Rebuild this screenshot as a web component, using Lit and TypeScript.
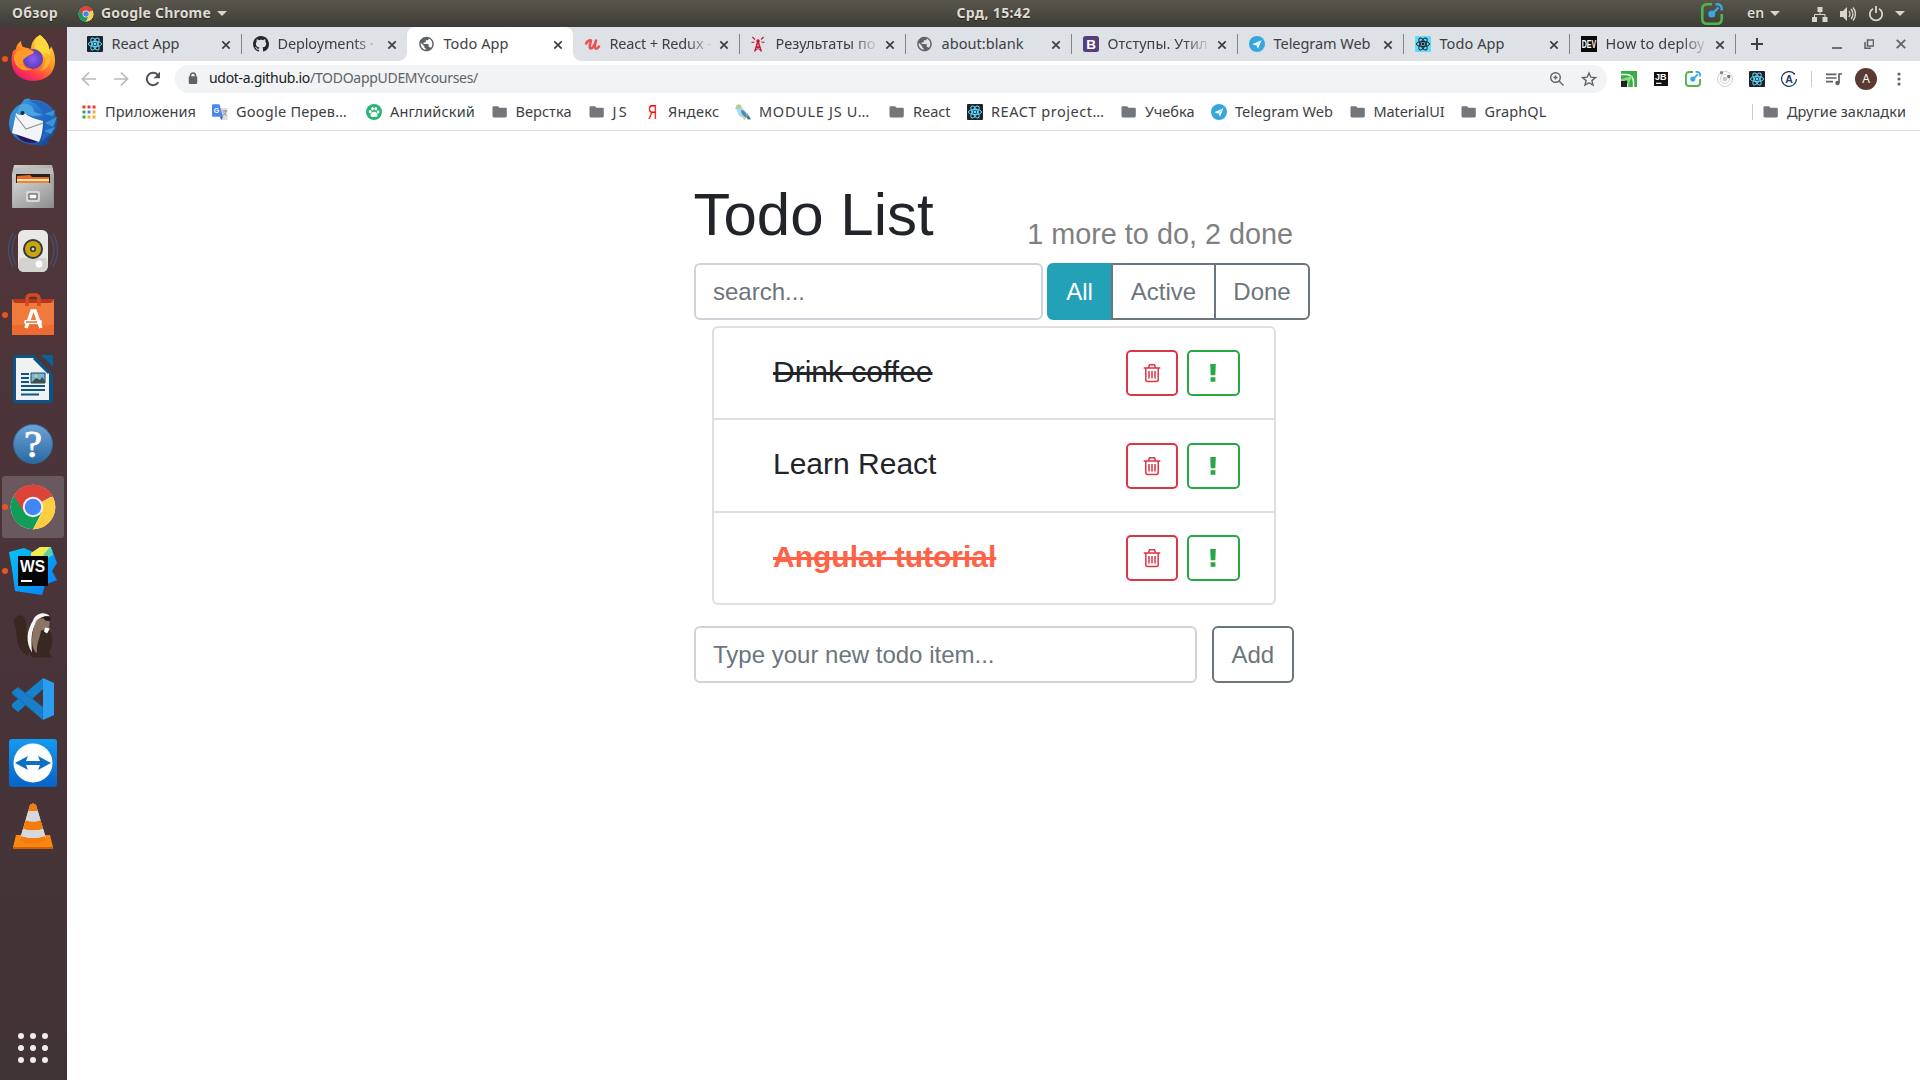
import { LitElement, html, svg, css } from "lit";
import { customElement } from "lit/decorators.js";

const orbit = (c: string) => svg`<g fill="none" stroke=${c} stroke-width="1">
  <ellipse cx="8" cy="8" rx="6.6" ry="2.6"/><ellipse cx="8" cy="8" rx="6.6" ry="2.6" transform="rotate(60 8 8)"/>
  <ellipse cx="8" cy="8" rx="6.6" ry="2.6" transform="rotate(120 8 8)"/></g><circle cx="8" cy="8" r="1.4" fill=${c}/>`;

const chromeArt = svg`<circle cx="24" cy="24" r="22.3" fill="#fff"/>
  <path d="M24 24L4.7 12.9A22.3 22.3 0 0 1 43.3 12.9Z" fill="#db4437"/>
  <path d="M24 24L4.7 12.9A22.3 22.3 0 0 0 24 46.3L33 29Z" fill="#0f9d58"/>
  <path d="M24 24L43.6 13.5A22.3 22.3 0 0 1 24 46.3L33.5 29Z" fill="#ffcd40"/>
  <path d="M24 14H43.9A22.3 22.3 0 0 0 4.7 12.9L15 29Z" fill="#db4437"/>
  <circle cx="24" cy="24" r="10.2" fill="#f1f1f1"/><circle cx="24" cy="24" r="8.2" fill="#4285f4"/>`;

const small: Record<string, unknown> = {
  react: svg`<rect width="16" height="16" rx="1" fill="#20232a"/>${orbit("#61dafb")}`,
  reactLight: svg`<rect width="16" height="16" rx="1" fill="#61dafb"/>${orbit("#20232a")}`,
  github: svg`<path fill="#24292e" d="M8 0C3.58 0 0 3.58 0 8c0 3.54 2.29 6.53 5.47 7.59.4.07.55-.17.55-.38 0-.19-.01-.82-.01-1.49-2.01.37-2.53-.49-2.69-.94-.09-.23-.48-.94-.82-1.13-.28-.15-.68-.52-.01-.53.63-.01 1.08.58 1.23.82.72 1.21 1.87.87 2.33.66.07-.52.28-.87.51-1.07-1.78-.2-3.64-.89-3.64-3.95 0-.87.31-1.59.82-2.15-.08-.2-.36-1.02.08-2.12 0 0 .67-.21 2.2.82.64-.18 1.32-.27 2-.27s1.36.09 2 .27c1.53-1.04 2.2-.82 2.2-.82.44 1.1.16 1.92.08 2.12.51.56.82 1.27.82 2.15 0 3.07-1.87 3.75-3.65 3.95.29.25.54.73.54 1.48 0 1.07-.01 1.93-.01 2.2 0 .21.15.46.55.38A8.01 8.01 0 0 0 16 8c0-4.42-3.58-8-8-8z"/>`,
  globe: svg`<path transform="translate(-1.26 -.76) scale(.73)" fill="#5f6368" d="M12 2C6.480 2 2 6.480 2 12s4.480 10 10 10 10-4.480 10-10S17.520 2 12 2zm-1 17.930c-3.950-.49-7-3.850-7-7.930 0-.62.08-1.210.21-1.790L9 15v1c0 1.100.9 2 2 2v1.930zm6.900-2.540c-.26-.81-1-1.390-1.900-1.390h-1v-3c0-.55-.45-1-1-1H8v-2h2c.55 0 1-.45 1-1V7h2c1.100 0 2-.9 2-2v-.41c2.930 1.190 5 4.060 5 7.410 0 2.080-.8 3.970-2.100 5.390z"/>`,
  udemy: svg`<path d="M1 7.500C2.500 5 4.500 4 6 4.500 6 6 3.800 10 5 12 6.500 13.500 9.500 10.500 11 4.500 10.200 8 9.500 12 10.500 12.500 11.500 13 13 12 14 10.500" fill="none" stroke="#ec5252" stroke-width="2.500" stroke-linecap="round" stroke-linejoin="round"/>`,
  tower: svg`<g fill="none" stroke="#c8193c" stroke-width="1.500"><path d="M7 5L3.700 15.500M7 5l3.300 10.500M4.700 11h4.600M4.500 14l4.500-3.500M9.500 14L5 10.500"/><path d="M4 3.500L1.300 1M3.500 6L.5 6.500M10 3.500L12.700 1M10.500 6l3 .5" stroke-width="1.200"/></g><circle cx="7" cy="5" r="1.800" fill="#c8193c"/>`,
  bootstrap: svg`<rect width="16" height="16" rx="2.500" fill="#563d7c"/><text x="8" y="13" text-anchor="middle" font-family="Liberation Sans, sans-serif" font-weight="700" font-size="13.500" fill="#fff">B</text>`,
  telegram: svg`<circle cx="8" cy="8" r="8" fill="#35a6de"/><path d="M3.300 8.200L12.500 4.200 9 12.800 7.400 9.500z" fill="#fff"/><path d="M7.200 9.400L10.600 6" stroke="#35a6de" stroke-width=".6"/>`,
  dev: svg`<rect width="16" height="16" fill="#0a0a0a"/><text x="8" y="12.200" text-anchor="middle" font-family="Liberation Sans, sans-serif" font-weight="700" font-size="11.500" textLength="14.500" lengthAdjust="spacingAndGlyphs" fill="#fff">DEV</text>`,
  apps: svg`<g><path d="M1.500 1.500h3v3h-3zM6.500 1.500h3v3h-3zM11.500 1.500h3v3h-3z" fill="#ea3b35"/><path d="M1.500 6.500h3v3h-3z" fill="#34a853"/><path d="M6.500 6.500h3v3h-3z" fill="#4285f4"/><path d="M11.500 6.500h3v3h-3z" fill="#f9ab2d"/><path d="M1.500 11.500h3v3h-3z" fill="#34a853"/><path d="M6.500 11.500h3v3h-3zM11.500 11.500h3v3h-3z" fill="#f9ab2d"/></g>`,
  translate: svg`<path d="M6 4h9.500v12H9z" fill="#dcdcdc"/><path d="M7.500 12.500h3.500L9.500 16z" fill="#3b67c4"/><path d="M0 1.200Q0 .3 1 .3h6.500L11 12.800H1Q0 12.800 0 11.800z" fill="#4a86ee"/><text x="1.800" y="8.500" font-family="Liberation Sans, sans-serif" font-weight="700" font-size="7" fill="#fff">G</text><path d="M10.500 7h4.500M12.700 6v1M14 7c-.3 2-1.500 3.500-3 4.300M11.500 8.500c.6 1.300 1.700 2.300 3 3" fill="none" stroke="#7b8894" stroke-width=".9"/>`,
  paw: svg`<circle cx="8" cy="8" r="8" fill="#29b473"/><g fill="#fff"><ellipse cx="4.200" cy="7.800" rx="1.400" ry="1.700"/><ellipse cx="6.600" cy="4.800" rx="1.400" ry="1.800"/><ellipse cx="9.800" cy="4.800" rx="1.400" ry="1.800"/><ellipse cx="12.100" cy="8" rx="1.400" ry="1.700"/><path d="M8 7.800c2 0 3.800 2.200 3.500 4-.4 1.800-2 .9-3.500.9s-3 .9-3.400-.9C4.300 10 6 7.800 8 7.800z"/></g>`,
  folder: svg`<path d="M1.300 2.300h4.700L7.500 3.800h6q1.300 0 1.300 1.300v7q0 1.400-1.300 1.400H1.700Q.5 13.500.5 12.100V3.300q0-1 .8-1z" fill="#73777b"/>`,
  yandex: svg`<text x="4" y="15.300" font-family="Liberation Sans, sans-serif" font-size="20" textLength="9" lengthAdjust="spacingAndGlyphs" fill="#f00">Я</text>`,
  bird: svg`<path d="M9 10l4 5.500 3-.3L12 9z" fill="#3975a5"/><path d="M2 4C1.500 8 3.500 13.500 9 14c3.500.3 4-2 3-4.500L6.500 2.500z" fill="#a5dcf6"/><path d="M6 6c3 0 6 3 6 7.500C8.500 13 6 10 6 6z" fill="#5b87a0"/><path d="M0 5L1.500 1.500c1.500-2 5-1 5 2L3 6z" fill="#8fd0f2"/><path d="M1.500 1.800C3.500-.5 6 .5 6.500 3L3.500 3.500z" fill="#e3bf4a"/><path d="M7.500 13.700c1.500.6 3 .3 4-.5l-1.700 2.500z" fill="#d6d137"/>`,
  privat: svg`<path d="M0 0h16v16H0z" fill="#37ad44"/><path d="M0 3.500h5C9.500 3.500 12.500 6.500 12.500 11v5" fill="none" stroke="#f4fff3" stroke-width="1.500"/><path d="M.5 8L13 4.500 8.500 10 8 16 6.500 9.500z" fill="#8fd884"/><path d="M0 8.500q7-.5 7 7.500H0z" fill="#f4fff3"/><path d="M0 9.700h6V16H0z" fill="#231f20"/>`,
  jb: svg`<path d="M1 1h14v14H1z" fill="#111"/><text x="2" y="9.200" font-family="Liberation Sans, sans-serif" font-weight="700" font-size="8.500" textLength="11.500" lengthAdjust="spacingAndGlyphs" fill="#fff">JB</text><path d="M3 12.300h5.500" stroke="#fff" stroke-width="1.200"/>`,
  orbitGray: svg`<g fill="none" stroke="#d0d0d0"><circle cx="8" cy="8" r="7.500"/><circle cx="8" cy="8" r="4.500"/></g><circle cx="8" cy="8" r="2.300" fill="#c8c8c8"/><circle cx="4.500" cy="1.800" r="1.700" fill="#888"/><circle cx="11.700" cy="5.500" r="1.700" fill="#777"/>`,
  apollo: svg`<path d="M13.500 3A7.400 7.400 0 1 0 15.400 8" fill="none" stroke="#22395f" stroke-width="1.200"/><circle cx="13.300" cy="2.800" r=".9" fill="#22395f"/><text x="8" y="11.800" text-anchor="middle" font-family="Liberation Sans, sans-serif" font-weight="700" font-size="10.500" fill="#22395f">A</text>`,
};

const clock = (n: number) => html`<svg width=${n} height=${n} viewBox="0 0 22 22"><path d="M11 1.300H6Q1.300 1.300 1.300 6v10q0 4.700 4.700 4.700h10q4.700 0 4.700-4.700v-5" fill="none" stroke="#4fb748" stroke-width="2.600"/><path d="M14.500 1.300H16q4.700 0 4.700 4.700v1.500M10.500 11.500L17.500 4.500" fill="none" stroke="#35a8e0" stroke-width="2.400"/><circle cx="10.800" cy="11" r="3.500" fill="#35a8e0"/></svg>`;

const tabs: [string, string, number][] = [
  ["react", "React App", 68], ["github", "Deployments ·", 96], ["globe", "Todo App", 65],
  ["udemy", "React + Redux -", 102], ["tower", "Результаты по", 100], ["globe", "about:blank", 82],
  ["bootstrap", "Отступы. Утил", 100], ["telegram", "Telegram Web", 97], ["reactLight", "Todo App", 65],
  ["dev", "How to deploy", 99],
];

/* icon, label, label width, slot width */
const bookmarks: [string, string, number, number][] = [
  ["apps", "Приложения", 91, 131], ["translate", "Google Перев…", 111, 154], ["paw", "Английский", 85, 125.5],
  ["folder", "Верстка", 56, 97], ["folder", "JS", 16.5, 55.5], ["yandex", "Яндекс", 51.5, 91],
  ["bird", "MODULE JS U…", 111, 154], ["folder", "React", 37.5, 78], ["react", "REACT project…", 113.5, 154],
  ["folder", "Учебка", 49.5, 90], ["telegram", "Telegram Web", 98, 138.5], ["folder", "MaterialUI", 71, 111],
  ["folder", "GraphQL", 62, 90],
];

const dock: [unknown, boolean, boolean][] = [
  [svg`<defs><linearGradient id="ff" x1=".8" y1="0" x2=".2" y2="1"><stop offset="0" stop-color="#ffe14d"/><stop offset=".45" stop-color="#ff9422"/><stop offset=".75" stop-color="#ff3c48"/><stop offset="1" stop-color="#e3127c"/></linearGradient><radialGradient id="fp"><stop offset="0" stop-color="#9059ff"/><stop offset="1" stop-color="#5b3fae"/></radialGradient></defs>
    <g transform="translate(0 -1)"><path d="M31 1c5 4 9 9 9 14 2 0 2-3 2-3 8 14 5 34-17 35C7 47-1 33 4 17l3-2c0-3 3-7 5-8 0 3 1 5 2 6l8 2c0-6 3-11 9-14z" fill="url(#ff)"/>
    <path d="M31 1c5 4 9 9 9 14 2 5 1 11-1 15-2-9-8-13-13-15-2-6 1-11 5-14z" fill="#ffd83b"/><circle cx="24" cy="25" r="10" fill="url(#fp)"/>
    <path d="M8 17c5-2 10 0 13-1 4 0 5 3 2 4-5 2-7 4-9 6-1 5 3 9 9 9-10 5-19-4-18-13z" fill="#ff9a28"/><path d="M34 18c5 5 2 15-3 19 7-1 12-9 10-16z" fill="#ffb52e"/></g>`, true, false],
  [svg`<defs><linearGradient id="tb" x1="0" y1="0" x2="1" y2="1"><stop offset="0" stop-color="#3ba5e4"/><stop offset=".6" stop-color="#2166c2"/><stop offset="1" stop-color="#173b82"/></linearGradient></defs>
    <path d="M14 2c2-3 6-3 8-1 12-1 22 5 25 16 2 8 0 14-3 19l-6 5 3 3-4 1 1 2-12-1C14 45 1 39 0 25 0 15 5 8 12 5z" fill="url(#tb)"/>
    <path d="M5 32l11 5 14 5c-11 5-21-1-25-10z" fill="#27165c"/><path d="M7 14L3 34l27 9c3-6 4-14 4-21-7-2-15-4-18-8-2 2-5 3-9 0z" fill="#f2f4f6"/><path d="M6 16l11 14 17-6" fill="none" stroke="#8e9297" stroke-width="1.100"/>
    <path d="M13 5c7-1 12 2 12 8l9 3c-7 1-13 2-18-2-2 2-5 2-8 1 0-4 2-8 5-10z" fill="#4aa4dd"/><path d="M20 2c7 2 13 7 15 15 2 9 0 18-3 25 11-6 17-17 13-28C41 5 32 1 20 2z" fill="#2467c0"/><path d="M35 15l11-4-2 6zM36 24l12-6-4 10zM35 32l11-4-4 7z" fill="#3895d8"/><circle cx="13.500" cy="14" r="2" fill="#172d49"/>`, false, false],
  [svg`<defs><linearGradient id="fg" x1="0" y1="0" x2="1" y2="1"><stop offset="0" stop-color="#d0d0d0"/><stop offset="1" stop-color="#8d8d8d"/></linearGradient></defs>
    <g transform="translate(0 -1)"><path d="M5 3h38l2 9v31H3V12z" fill="url(#fg)"/><path d="M4 6h40v6H4z" fill="#bdbdbd"/><path d="M7 12h34v9H7z" fill="#222"/><path d="M8 14l13-1 2 2h17v7H8z" fill="#e66a23"/><path d="M8 17h32v2H8z" fill="#f6dfae"/><path d="M8 19h32v2H8z" fill="#e88732"/>
    <path d="M5 21h38l2 25H3z" fill="url(#fg)"/><rect x="17" y="29" width="14" height="11" rx="2" fill="#d8d8d8"/><rect x="20" y="32" width="8" height="5" fill="#fafafa" stroke="#444"/></g>`, false, false],
  [svg`<g fill="none" stroke="#455777" stroke-width="1.300" opacity=".85"><path d="M7 8Q-1 23 7 38M4 6Q-5 23 4 40M41 8Q49 23 41 38M44 6Q53 23 44 40"/></g><rect x="9" y="3" width="30" height="42" rx="6" fill="#e8e8e5"/><path d="M11 31h26l2 7q-1 7-5 7H14q-5-1-5-7z" fill="#d3d3cf"/><circle cx="24" cy="22" r="10" fill="#34383a"/><circle cx="24" cy="22" r="8" fill="#c8a50d"/><circle cx="24" cy="22" r="3" fill="#27343d"/><circle cx="24" cy="22" r="1.500" fill="#d7d7c0"/><circle cx="30" cy="37" r="3.500" fill="#fff"/>`, false, false],
  [svg`<path d="M3 8h42v36H3z" fill="#ed6a31"/><path d="M3 8h42l-3 4H6z" fill="#b7371a"/><path d="M3 12h42v22H3z" fill="#f18443" opacity=".65"/><path d="M18 15V8q0-4 4-4h4q4 0 4 4v7" fill="none" stroke="#d74722" stroke-width="3.500"/><path d="M17 37l6-17h3l6 17" fill="none" stroke="#fff" stroke-width="3.600"/><rect x="15" y="29" width="18" height="4" rx="2" fill="#fff"/><path d="M17 31h11" stroke="#ed6a31" stroke-width="1.500"/>`, true, false],
  [svg`<path d="M7 0h19l18 17v28q0 3-3 3H7q-3 0-3-3V3q0-3 3-3z" fill="#0a5588"/><path d="M7 3h18l15 15v27H7z" fill="#f1f1f1"/><path d="M25 0h6l13 13v7z" fill="#4c363c"/><path d="M25 3L40 18" stroke="#0a5588" stroke-width="3"/><path d="M32 0h12v12z" fill="#0a6298"/><path d="M12 19h8M12 23h8M12 27h8M12 31h24M12 35h24M12 39.500h18" stroke="#0b5688" stroke-width="2"/><path d="M22 18h14v10H22z" fill="#75b8db" stroke="#174768"/><path d="M22 28l5-5 4 2 2-3 3 4v2z" fill="#454b46"/><circle cx="27" cy="21" r="1.500" fill="#f5c646"/>`, false, false],
  [svg`<defs><linearGradient id="hp" x2="0" y2="1"><stop offset="0" stop-color="#6da2d6"/><stop offset="1" stop-color="#2869a4"/></linearGradient></defs><circle cx="24" cy="25" r="19.500" fill="url(#hp)" stroke="#386b9e"/><text x="24" y="38" text-anchor="middle" font-family="Liberation Serif, serif" font-size="38" textLength="18" lengthAdjust="spacingAndGlyphs" stroke="#fff" stroke-width=".8" fill="#fff">?</text>`, false, false],
  [chromeArt, true, true],
  [svg`<defs><linearGradient id="ws" x2="1" y2="1"><stop offset="0" stop-color="#07c3f2"/><stop offset="1" stop-color="#087cfa"/></linearGradient></defs><path d="M0 5l15-4 9 4 7-5h11l6 16-5 8 5 9-12 5-3 10-27-4L3 22z" fill="url(#ws)"/><path d="M22 6l9-6h11l-3 9H22z" fill="#f2ed4c"/><path d="M34 8l7-8 2 3 1 5-5 3z" fill="#55d3b0"/><path d="M9 9h30v30H9z" fill="#050505"/><text x="11" y="25" textLength="25" lengthAdjust="spacingAndGlyphs" font-family="Liberation Sans, sans-serif" font-size="17" font-weight="700" fill="#fff">WS</text><path d="M12 34h11" stroke="#fff" stroke-width="2"/>`, true, false],
  [svg`<g transform="translate(0 .5)"><path d="M5 11c0-8 10-10 12-1 1 8 0 14 4 23l-2 11C9 40 8 30 7 18z" fill="#392722"/><path d="M26 5c4-6 14-4 16 2l-1 13c4 6 3 15-1 21l3 5H24c-6-4-7-16-3-28z" fill="#392722"/><path d="M24 9c3-9 14-9 17-4-6-1-12 1-14 7-5 7-5 17-4 29-7-11-5-22 1-32z" fill="#f7f5f1"/><path d="M27 10c2-4 8-4 10-1l4 1-1 7-8 2c-1 8-5 13-4 23-7-6-6-20-1-32z" fill="#8b7565"/><path d="M36 16l5 1-3 5-3-2z" fill="#fff"/><path d="M35 5h6v4h-5z" fill="#201b1b"/></g>`, false, false],
  [svg`<path d="M34 3l11 5v32l-11 5z" fill="#2b9eef"/><path d="M34 3v11L9 37l-6-5v-3z" fill="#1681cc"/><path d="M3 17l6-5 25 20v13L3 19z" fill="#1374bd"/><path d="M3 17l5-4 25 19v12z" fill="#187fc8"/>`, false, false],
  [svg`<defs><linearGradient id="tv" x2="0" y2="1"><stop offset="0" stop-color="#139af0"/><stop offset="1" stop-color="#0863c9"/></linearGradient></defs><rect width="48" height="48" rx="3" fill="url(#tv)"/><circle cx="24" cy="24" r="19.500" fill="#fff"/><path d="M6 24l13-7-2 5h14l-2-5 13 7-13 7 2-5H17l2 5z" fill="#0e70c5"/>`, false, false],
  [svg`<path d="M7 32h34l3 12H4z" fill="#f88611"/><path d="M4 44h40v2H4z" fill="#d55f04"/><path d="M21 2q3-3 6 0l10 34q-12 9-26 0z" fill="#f0eff0"/><path d="M21 2q3-3 6 0l1.800 6h-9.500zM16.800 17q7 3 14.700 0l2.800 9q-10 3-20.300 0zM12.200 33q12 4 23.600 0l1.500 4q-13 8-26.500 0z" fill="#f47b0d"/><path d="M19.200 8l9.600 0 2.700 9q-7 3-14.700 0zM14 26q10 3 20.300 0l2 7q-12 4-24.300 0z" fill="#d5d8dc"/>`, false, false],
];

const ic = (name: string) => html`<svg class="ic" width="16" height="16" viewBox="0 0 16 16">${small[name]}</svg>`;
const caret = html`<svg width="10" height="5" viewBox="0 0 10 5"><path d="M0 0h10L5 5z" fill="#d8d5cd"/></svg>`;
const label = (text: string, w: number) => html`<span class="fit" data-w=${w}>${text}</span>`;

const todos: [string, string][] = [["Drink coffee", "done"], ["Learn React", ""], ["Angular tutorial", "done important"]];

@customElement("app-root")
export class AppRoot extends LitElement {
  static styles = css`
    :host { display: block; width: 1920px; height: 1080px; overflow: hidden; background: #fff; font-family: "Noto Sans", "Open Sans", sans-serif; color: #3c4043; }
    * { box-sizing: border-box; }
    svg { display: block; flex: none; }
    .fit { display: block; white-space: nowrap; }
    .top { height: 27px; background: linear-gradient(#59564c, #3e3c37); display: grid; grid-template-columns: 956.5px 1fr auto; align-items: center; color: #dfdbd2; font-size: 14px; font-weight: 700; line-height: 24px; text-shadow: 0 1px 1px #222; }
    .top .fit { margin-top: -1px; }
    .top-left { display: flex; align-items: center; padding-left: 12px; }
    .top-chrome { margin: 0 7px 0 20px; }
    .top-left .caret { margin-left: 6px; }
    .top-right { display: flex; align-items: center; padding-right: 15px; }
    .lang { margin: 0 6px 0 24px; font-weight: 600; }
    .net { margin-left: 32px; }
    .vol { margin: 0 12px; }
    .last { margin-left: 11px; }
    .body { display: flex; height: 1053px; }
    .dock { width: 67px; flex: none; background: linear-gradient(#513639, #49343a 55%, #403336); display: flex; flex-direction: column; }
    .slot { height: 64px; display: flex; align-items: center; justify-content: center; position: relative; padding-right: 1px; }
    .slot.on::before { content: ""; position: absolute; left: 2px; top: 1px; width: 62px; height: 62px; border-radius: 3px; background: #6a585f; }
    .slot.run::after { content: ""; position: absolute; left: 2px; top: 29px; width: 6px; height: 6px; border-radius: 50%; background: #e95420; }
    .slot svg { position: relative; overflow: visible; }
    .grid { margin: auto 0 17px 18px; display: grid; grid-template-columns: repeat(3, 6px); gap: 6px; }
    .grid i { width: 6px; height: 6px; border-radius: 50%; background: #f0eeec; }
    .win { flex: 1; min-width: 0; }
    .tabs { height: 34px; background: #dee1e6; display: flex; padding-left: 8px; font-size: 14.5px; }
    .tab { width: 166px; height: 34px; display: flex; align-items: center; padding-left: 12px; position: relative; flex: none; }
    .tab.sep::after { content: ""; position: absolute; right: -1px; top: 7px; width: 1px; height: 20px; background: #808488; }
    .tab.active { background: #fff; border-radius: 8px 8px 0 0; }
    .tab.active::before, .tab.active::after { content: ""; position: absolute; bottom: 0; width: 8px; height: 8px; }
    .tab.active::before { left: -8px; background: radial-gradient(circle at 0 0, #dee1e6 7.5px, #fff 8px); }
    .tab.active::after { right: -8px; background: radial-gradient(circle at 100% 0, #dee1e6 7.5px, #fff 8px); }
    .title { width: 106px; flex: none; margin-left: 8.5px; line-height: 22px; height: 24px; -webkit-mask-image: linear-gradient(90deg, #000 76px, transparent 103px); mask-image: linear-gradient(90deg, #000 76px, transparent 103px); }
    .full { -webkit-mask-image: none; mask-image: none; }
    .close { margin-left: .5px; margin-top: 1px; }
    .plus { margin: 11px 0 0 16px; }
    .winctl { margin-left: auto; display: flex; gap: 22px; padding: 12px 14px 0 0; }
    .bar { height: 36px; display: flex; align-items: center; padding: 0 0 0 14px; }
    .nav { display: flex; gap: 16px; }
    .omni { width: 1432px; height: 28px; margin-left: 14px; background: #f1f3f4; border-radius: 14px; display: flex; align-items: center; padding-left: 13px; padding-right: 10px; font-size: 14px; color: #5f6368; }
    .omni .fit { line-height: 20px; margin-top: -2px; }
    .host { color: #202124; margin-left: 11px; }
    .omni .zoomer { margin-left: auto; margin-right: 16px; }
    .ext { display: flex; gap: 16px; margin-left: 14px; align-items: center; }
    .vr { width: 1px; height: 16px; background: #c8cacd; }
    .bar .vr { margin: 0 14px; }
    .avatar { width: 22px; height: 22px; border-radius: 50%; background: #5b3a33; color: #fff; font-size: 12px; line-height: 22px; text-align: center; margin: 0 20px 0 13px; }
    .marks { height: 34px; border-bottom: 1px solid #dadce0; display: flex; align-items: center; padding: 0 14px 4px 14px; font-size: 14.5px; line-height: 20px; }
    .marks .fit { margin-top: -2px; }
    .mark { display: flex; align-items: center; gap: 8px; flex: none; }
    .other { margin-left: auto; display: flex; align-items: center; gap: 8px; }
    .other .vr { margin-right: 2px; }
    .page { width: 600px; margin: 0 auto; padding-top: 48px; position: relative; left: .5px; font-family: "Liberation Sans", Arial, sans-serif; color: #212529; }
    .head { display: flex; justify-content: space-between; align-items: flex-end; height: 72px; margin-bottom: 12px; }
    h1 { font-size: 60px; line-height: 72px; margin: 0 0 0 -.5px; font-weight: 400; }
    h2 { font-size: 28.8px; line-height: 34.56px; font-weight: 400; margin: 0 1px -1px 0; color: #808080; }
    .row { display: flex; height: 57px; font-size: 24px; line-height: 36px; }
    .field { border: 2px solid #ced4da; border-radius: 6px; padding: 8.5px 17px; color: #6c757d; flex: none; }
    .search { width: 348.5px; margin-right: 4.5px; }
    .new { width: 503px; margin-right: 14.5px; }
    .btn { border: 2px solid #6c757d; color: #6c757d; padding: 8.5px 0; flex: none; text-align: center; }
    .all { background: #23a2b7; border-color: #23a2b7; color: #fff; border-radius: 6px 0 0 6px; width: 65px; }
    .mid { margin-left: -1px; width: 105px; }
    .end { margin-left: -2px; width: 96px; border-radius: 0 6px 6px 0; }
    .add { border-radius: 6px; width: 82.5px; }
    .list { margin: 6px 18px 21px; border: 2px solid #dfdfdf; border-radius: 6px; height: 279px; display: grid; grid-template-rows: 92px 93px 90px; }
    .item { display: flex; align-items: flex-start; padding: 22px 34px 0 59px; border-bottom: 2px solid #dfdfdf; font-size: 30px; line-height: 45px; }
    .item:last-child { border-bottom: 0; }
    .item:nth-child(2) { padding-top: 23px; }
    .item:nth-child(2) .text { margin-top: -2px; }
    .text { flex: 1; margin-top: -1px; }
    .done { text-decoration: line-through; }
    .important { color: #ff6347; font-weight: 700; }
    .act { height: 46px; border: 2px solid; border-radius: 5px; display: flex; align-items: center; justify-content: center; }
    .del { width: 52px; color: #dc3545; margin-right: 9px; }
    .imp { width: 53px; color: #28a745; padding-right: 1px; }
  `;

  firstUpdated() {
    // Spread every chrome label over its column width.
    this.renderRoot.querySelectorAll<HTMLElement>(".fit").forEach((el) => {
      el.style.width = "max-content";
      const natural = el.getBoundingClientRect().width;
      const want = Number(el.dataset.w);
      el.style.letterSpacing = `${(want - natural) / (el.textContent || " ").length}px`;
    });
  }

  render() {
    return html`
      <header class="top">
        <div class="top-left">${label("Обзор", 46)}<svg class="top-chrome" width="16" height="16" viewBox="0 0 48 48">${chromeArt}</svg>${label("Google Chrome", 110)}<span class="caret">${caret}</span></div>
        <div>${label("Срд, 15:42", 74)}</div>
        <div class="top-right">
          ${clock(22)}<span class="lang">${label("en", 17)}</span>${caret}
          <svg class="net" width="16" height="16" viewBox="0 0 16 16"><path d="M5.500 1h5v5h-5zM0 11h5v5H0zM10.500 11h5v5h-5z" fill="#d8d5cd"/><path d="M8 6v3M2.500 11V8.500h10.500V11" fill="none" stroke="#d8d5cd"/></svg>
          <svg class="vol" width="16" height="16" viewBox="0 0 16 16"><path d="M0 5h3l4-4v14l-4-4H0z" fill="#d8d5cd"/><path d="M9 5q2 3 0 6M11 3q4 5 0 10M13 1.500q5 6.500 0 13" fill="none" stroke="#d8d5cd" stroke-width="1.300"/></svg>
          <svg width="16" height="16" viewBox="0 0 16 16"><path d="M5 2.700a6.200 6.200 0 1 0 6 0M8 0v7" fill="none" stroke="#d8d5cd" stroke-width="1.800"/></svg>
          <span class="last">${caret}</span>
        </div>
      </header>
      <div class="body">
        <nav class="dock">
          ${dock.map(([art, run, on]) => html`<div class="slot ${run ? "run" : ""} ${on ? "on" : ""}"><svg width="48" height="48" viewBox="0 0 48 48">${art}</svg></div>`)}
          <div class="grid">${Array.from({ length: 9 }, () => html`<i></i>`)}</div>
        </nav>
        <div class="win">
          <div class="tabs">
            ${tabs.map(([icon, text, w], i) => html`<div class="tab ${i === 2 ? "active" : i === 1 ? "" : "sep"}">
              ${ic(icon)}<div class="title ${w < 98 && i !== 1 ? "full" : ""}">${label(text, w)}</div>
              <svg class="close" width="16" height="16" viewBox="0 0 16 16"><path d="M4.300 4.300l7.400 7.400M11.700 4.300l-7.400 7.400" stroke="#3c4043" stroke-width="1.700"/></svg></div>`)}
            <svg class="plus" width="12" height="12" viewBox="0 0 12 12"><path d="M6 0v12M0 6h12" stroke="#3c4043" stroke-width="2"/></svg>
            <div class="winctl">
              <svg width="10" height="10" viewBox="0 0 10 10"><path d="M0 9h10" stroke="#5f6368" stroke-width="1.800"/></svg>
              <svg width="10" height="10" viewBox="0 0 10 10"><path d="M3.500 1h6v6h-6zM1 3v6.300h6" fill="none" stroke="#5f6368" stroke-width="1.600"/></svg>
              <svg width="10" height="10" viewBox="0 0 10 10"><path d="M.8.8l8.400 8.400M9.200.8L.8 9.200" stroke="#5f6368" stroke-width="1.800"/></svg>
            </div>
          </div>
          <div class="bar">
            <div class="nav">
              <svg width="16" height="16" viewBox="0 0 16 16"><path d="M15 8H2M8 1.500L1.500 8 8 14.500" fill="none" stroke="#b8babd" stroke-width="1.700"/></svg>
              <svg width="16" height="16" viewBox="0 0 16 16"><path d="M1 8h13M8 1.500L14.500 8 8 14.500" fill="none" stroke="#b8babd" stroke-width="1.700"/></svg>
              <svg width="16" height="16" viewBox="0 0 16 16"><path d="M13.300 11.200A6.200 6.200 0 1 1 13 4.300" fill="none" stroke="#50545a" stroke-width="2"/><path d="M15 .8v6.500H8.500z" fill="#50545a"/></svg>
            </div>
            <div class="omni">
              <svg width="10" height="14" viewBox="0 0 10 14"><path d="M2.500 6V3.500a2.500 2.500 0 0 1 5 0v2" fill="none" stroke="#5f6368" stroke-width="1.500"/><rect x=".8" y="4.300" width="8.400" height="7.800" rx="1" fill="#5f6368"/></svg>
              <span class="host">${label("udot-a.github.io", 101)}</span>${label("/TODOappUDEMYcourses/", 168)}
              <svg class="zoomer" width="16" height="16" viewBox="0 0 16 16"><circle cx="6.500" cy="6.500" r="4.800" fill="none" stroke="#5f6368" stroke-width="1.400"/><path d="M10 10l4.500 4.500M4.500 6.500h4M6.500 4.500v4" stroke="#5f6368" stroke-width="1.400"/></svg>
              <svg width="16" height="16" viewBox="0 0 16 16"><path d="M8 2l1.800 4.200 4.600.4-3.500 3 1.100 4.500L8 11.700l-4 2.400 1.100-4.500-3.500-3 4.600-.4z" fill="none" stroke="#5f6368" stroke-width="1.400"/></svg>
            </div>
            <div class="ext">${ic("privat")}${ic("jb")}${clock(16)}${ic("orbitGray")}${ic("react")}${ic("apollo")}</div>
            <div class="vr"></div>
            <svg width="16" height="14" viewBox="0 0 16 14"><path d="M0 2.300h10.500M0 6h10.500M0 9.700h7M13 11V2h3" fill="none" stroke="#5f6368" stroke-width="1.700"/><circle cx="11.500" cy="11" r="2.200" fill="#5f6368"/></svg>
            <div class="avatar">A</div>
            <svg width="4" height="14" viewBox="0 0 4 14" fill="#5f6368"><circle cx="2" cy="2" r="1.600"/><circle cx="2" cy="7" r="1.600"/><circle cx="2" cy="12" r="1.600"/></svg>
          </div>
          <div class="marks">
            ${bookmarks.map(([icon, text, w, slot]) => html`<div class="mark" style="width:${slot}px">${ic(icon)}${label(text, w)}</div>`)}
            <div class="other"><div class="vr"></div>${ic("folder")}${label("Другие закладки", 119)}</div>
          </div>
          <main class="page">
            <div class="head"><h1>Todo List</h1><h2>1 more to do, 2 done</h2></div>
            <div class="row"><div class="field search">search...</div><div class="btn all">All</div><div class="btn mid">Active</div><div class="btn end">Done</div></div>
            <div class="list">
              ${todos.map(([text, cls]) => html`<div class="item"><div class="text"><span class=${cls}>${text}</span></div>
                <div class="act del"><svg width="18" height="20" viewBox="0 0 18 20"><path d="M.7 5h16.600M5.500 4.800l1-3h5l1 3M2.800 5v11.500q0 2 1.700 2h9q1.700 0 1.700-2V5M6 8v7.500M9 8v7.500M12 8v7.500" fill="none" stroke="currentColor" stroke-width="1.500"/></svg></div>
                <div class="act imp"><svg width="6" height="18" viewBox="0 0 6 18"><path d="M.2 0h5.600L5.300 11.300H.7zM.6 13.200h4.800v4.500H.6z" fill="currentColor"/></svg></div></div>`)}
            </div>
            <div class="row"><div class="field new">Type your new todo item...</div><div class="btn add">Add</div></div>
          </main>
        </div>
      </div>`;
  }
}
